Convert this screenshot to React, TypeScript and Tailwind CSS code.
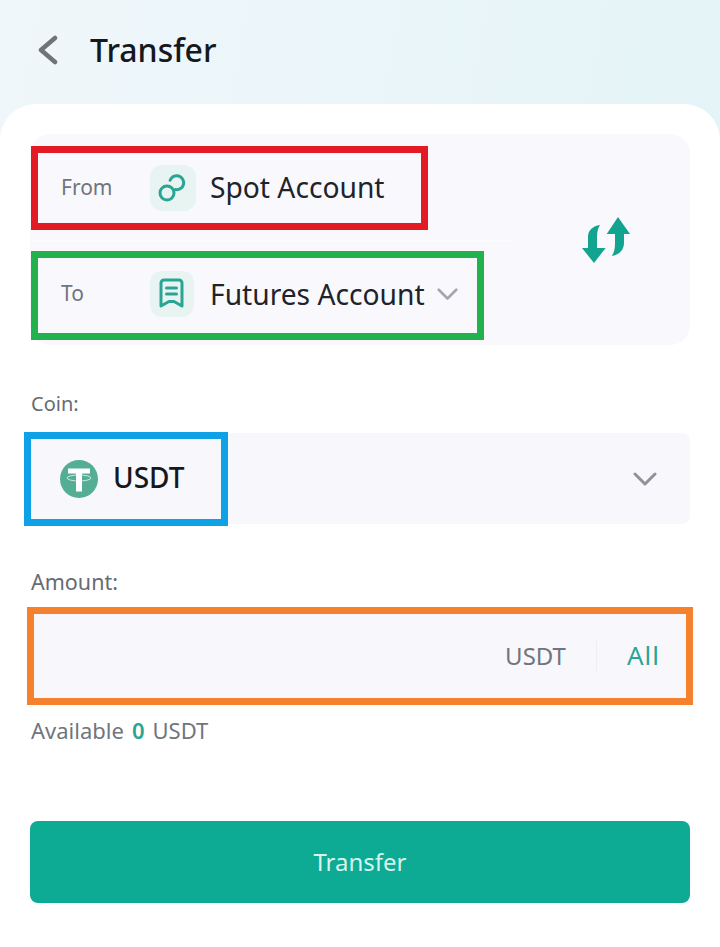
const LinkIcon = () => (
  <svg width="32" height="32" viewBox="0 0 32 32" fill="none" stroke="#2aa594" strokeWidth="3">
    <circle cx="10" cy="21" r="7" />
    <path d="M13.100 8.300A7 7 0 1 1 18.500 17.600" strokeLinecap="round" />
  </svg>
);

const ReceiptIcon = () => (
  <svg width="28" height="32" viewBox="0 0 28 32" fill="none" stroke="#2aa594" strokeWidth="3" strokeLinejoin="round" strokeLinecap="round">
    <path d="M3 5a3 3 0 0 1 3-3h15a3 3 0 0 1 3 3v23l-8-4.500h-5l-8 4.500z" />
    <path d="M8.500 10h10M8.500 16h10" />
  </svg>
);

const SwapIcon = () => (
  <svg width="48" height="46" viewBox="0 0 48 46" fill="#12a48f">
    <path d="M36 0 48 17h-6v9c0 7-5 12-12.300 13C32 36 33 32 33 26v-9h-8.300z" />
    <path d="M12 46 0 31h6V20C6 13 11 9 18 8c-2 3-3 7-3 12v11h8.600z" />
  </svg>
);

const Chevron = ({ w, color }: { w: number; color: string }) => (
  <svg width={w} viewBox="0 0 24 14" fill="none" stroke={color} strokeWidth="3" strokeLinecap="round" strokeLinejoin="round">
    <path d="M2 2l10 10L22 2" />
  </svg>
);

const TetherIcon = () => (
  <svg width="38" height="38" viewBox="0 0 38 38">
    <circle cx="19" cy="19" r="19" fill="#53ae94" />
    <path d="M8 8.500h22v5h-8v18h-6v-18H8z" fill="#fff" />
    <ellipse cx="19" cy="18" rx="12" ry="3" fill="none" stroke="#fff" strokeWidth="1" strokeOpacity="0.700" />
  </svg>
);

const App = () => {
  return (
    <div className="w-[720px] h-[947px] overflow-hidden bg-[linear-gradient(100deg,#f0f7fb,#e2f3f6)] font-['Noto_Sans',sans-serif]">
      <div className="h-[104px] flex items-center pl-[37px] pb-[4px]">
        <svg width="22" height="30" viewBox="0 0 22 30" fill="none" stroke="#6f7479" strokeWidth="4.500" strokeLinecap="round" strokeLinejoin="round">
          <path d="M18 3 4 15l14 12" />
        </svg>
        <span className="ml-[31px] text-[32px] font-medium leading-none text-[#16181d]">Transfer</span>
      </div>

      <div className="h-[843px] bg-white rounded-t-[36px] px-[30px] pt-[30px]">
        <div className="h-[211px] bg-[#f9f9fd] rounded-[20px] flex pt-[12px]">
          <div className="w-[455px] ml-px">
            <div className="w-[397px] h-[84px] border-[7px] border-[#e31b24] flex items-center pl-[23px]">
              <span className="w-[89px] text-[21px] text-[#70757d]">From</span>
              <div className="w-[46px] h-[46px] rounded-[12px] bg-[#e8f4f2] flex items-center justify-center">
                <LinkIcon />
              </div>
              <span className="ml-[14px] -mt-[2px] text-[28.200px] text-[#20232a]">Spot Account</span>
            </div>
            <div className="w-[480px] h-px my-[10px] bg-[#fcfcfe]" />
            <div className="w-[453px] h-[89px] border-[7px] border-[#22b14c] flex items-center pl-[23px] pb-[3px]">
              <span className="w-[89px] text-[21px] text-[#70757d]">To</span>
              <div className="w-[44px] h-[46px] rounded-[12px] bg-[#e8f4f2] flex items-center justify-center">
                <ReceiptIcon />
              </div>
              <span className="ml-[16px] text-[28.200px] text-[#20232a]">Futures Account</span>
              <div className="ml-[12px]">
                <Chevron w={21} color="#a3a6ad" />
              </div>
            </div>
          </div>
          <div className="ml-[96px] self-center -mt-[12px]">
            <SwapIcon />
          </div>
        </div>

        <div className="mt-[44px] h-[30px] leading-[30px] text-[20px] pl-px text-[#666b72]">Coin:</div>
        <div className="mt-[14px] h-[91px] bg-[#f8f8fc] rounded-[8px] flex items-center justify-between pr-[33px]">
          <div className="-ml-[6px] w-[204px] h-[94px] border-[7px] border-[#0ea1e6] bg-[#f7f7fc] flex items-center pl-[29px]">
            <TetherIcon />
            <span className="ml-[15px] -mt-[3px] text-[28px] font-medium text-[#16181d]">USDT</span>
          </div>
          <Chevron w={24} color="#8f9299" />
        </div>

        <div className="mt-[43px] h-[30px] leading-[30px] text-[21.500px] pl-px text-[#666b72]">Amount:</div>
        <div className="-mx-[3px] mt-[10px] h-[98px] border-[7px] border-[#f5812d] bg-[#f8f8fc] flex items-center justify-end pr-[26px]">
          <span className="text-[24px] text-[#70757d]">USDT</span>
          <div className="w-px h-[30px] mx-[30px] bg-[#eeeef3]" />
          <span className="text-[26px] leading-none -mt-[2px] tracking-[1px] text-[#2aa594]">All</span>
        </div>

        <div className="mt-[10px] pl-px flex items-center text-[22px] text-[#70757d] leading-[30px]">
          <span>Available</span>
          <span className="ml-[8px] mr-[8px] font-semibold text-[#2aa594]">0</span>
          <span>USDT</span>
        </div>

        <button className="mt-[76px] w-full h-[82px] rounded-[8px] bg-[#0daa94] text-[24px] text-[#d8f3ee]">Transfer</button>
      </div>
    </div>
  );
};

export default App;
